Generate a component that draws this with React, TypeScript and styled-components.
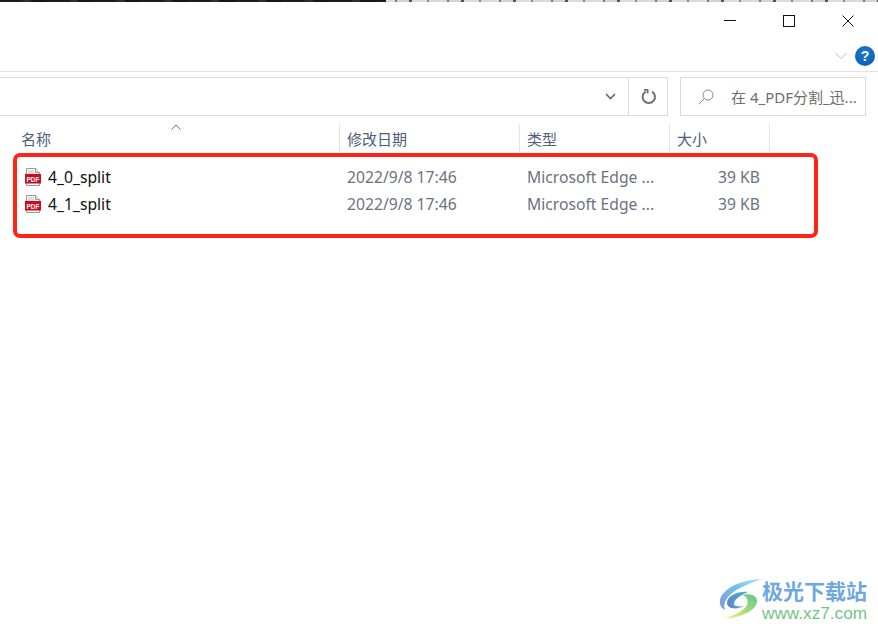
import React from 'react'
import styled, { createGlobalStyle } from 'styled-components'

const Global = createGlobalStyle`
    html, body { margin: 0; padding: 0; background: #fff; }
    body { font-family: "Noto Sans", "Noto Sans CJK SC", sans-serif; }
`

const Page = styled.div`
    position: relative;
    width: 878px;
    height: 629px;
    overflow: hidden;
    background: #fff;
`

const TopStrip = styled.div`
    display: flex;
    height: 2px;
`

const StripDark = styled.div`
    width: 386px;
    background: repeating-linear-gradient(90deg, #1d1d1d 0 23px, #2e2e2e 23px 31px, #161616 31px 47px);
`

const StripLight = styled.div`
    flex: 1;
    background: repeating-linear-gradient(90deg, #dcdcdc 0 9px, #777 9px 11px, #d4d4d4 11px 23px, #555 23px 26px, #dcdcdc 26px 41px, #888 41px 43px, #d8d8d8 43px 52px);
`

const TitleBar = styled.div`
    display: flex;
    justify-content: flex-end;
    align-items: center;
    height: 38px;
    padding-right: 1px;
`

const WindowButton = styled.div`
    display: flex;
    align-items: center;
    justify-content: center;
    width: 58px;
    height: 38px;
    &:nth-child(2) { width: 60px; padding-right: 1px; box-sizing: border-box; }
`

const RibbonRow = styled.div`
    display: flex;
    justify-content: flex-end;
    align-items: center;
    gap: 8px;
    height: 31px;
    padding-right: 3px;
    border-bottom: 1px solid #e3e3e3;
`

const HelpBadge = styled.div`
    width: 20px;
    height: 20px;
    border-radius: 50%;
    background: radial-gradient(circle at 50% 35%, #1a7ad0, #0a5bb0);
    color: #fff;
    font: bold 14px/20px "Liberation Sans", sans-serif;
    text-align: center;
`

const NavRow = styled.div`
    display: flex;
    height: 39px;
    margin-top: 5px;
`

const AddressBox = styled.div`
    display: flex;
    justify-content: flex-end;
    width: 668px;
    box-sizing: border-box;
    border: 1px solid #dadada;
    border-left: 0;
`

const AddressButton = styled.div`
    display: flex;
    align-items: center;
    justify-content: center;
    width: ${(p: { $w: number }) => p.$w}px;
`

const RefreshButton = styled(AddressButton)`
    border-left: 1px solid #dadada;
    padding-left: 2px;
    box-sizing: border-box;
`

const SearchBox = styled.div`
    display: flex;
    align-items: center;
    box-sizing: border-box;
    width: 186px;
    margin-left: 12px;
    padding-left: 17px;
    border: 1px solid #dadada;
`

const SearchText = styled.span`
    margin-left: 17px;
    font-size: 15px;
    color: #6d6d6d;
    white-space: nowrap;
`

const Columns = styled.div`
    display: grid;
    grid-template-columns: 340px 180px 150px 100px;
`

const HeaderRow = styled(Columns)`
    position: relative;
    height: 30px;
    margin-top: 8px;
`

const HeaderCell = styled.div`
    padding-left: ${(p: { $first?: boolean }) => (p.$first ? 21 : 7)}px;
    border-right: 1px solid #e5e5e5;
    font-size: 15px;
    line-height: 30px;
    color: #4c607a;
`

const SortCaret = styled.svg`
    position: absolute;
    left: 171px;
    top: 0;
`

const FileList = styled.div`
    margin-top: 9px;
`

const FileRow = styled(Columns)`
    height: 27px;
    align-items: center;
    font-size: 15.7px;
    line-height: 22px;
    color: #6b7280;
`

const NameCell = styled.div`
    display: flex;
    align-items: center;
    gap: 7px;
    padding-left: 25px;
    color: #111;
`

const PlainCell = styled.div`
    padding-left: 7px;
    white-space: nowrap;
`

const SizeCell = styled.div`
    padding-right: 10px;
    text-align: right;
    white-space: nowrap;
`

const RedFrame = styled.div`
    position: absolute;
    left: 13px;
    top: 153px;
    width: 805px;
    height: 85px;
    box-sizing: border-box;
    border: 4px solid #ff2415;
    border-radius: 7px;
`

const Watermark = styled.div`
    position: absolute;
    left: 718px;
    top: 578px;
    display: flex;
`

const BrandText = styled.div`
    display: flex;
    flex-direction: column;
`

const BrandName = styled.div`
    font: bold 21px/25px "Noto Sans CJK SC", sans-serif;
    color: #6fa8de;
    white-space: nowrap;
`

const BrandUrl = styled.div`
    margin-top: 1px;
    font: 17.2px/18px "Liberation Sans", sans-serif;
    color: #72c486;
    white-space: nowrap;
`

function PdfIcon() {
    return (
        <svg width="16" height="18" viewBox="0 0 16 18">
            <path d="M1.5 .5H10.5L14.5 4.5V17.5H1.5Z" fill="#fff" stroke="#9a9a9a" />
            <path d="M10.5 .5V4.5H14.5" fill="#e8e8e8" stroke="#9a9a9a" />
            <path d="M3 3H9M3 5H9" stroke="#bdbdbd" />
            <rect x="0" y="6" width="16" height="9.5" fill="#d3061c" />
            <text x="8" y="13.8" textAnchor="middle" textLength="13" lengthAdjust="spacingAndGlyphs" fontFamily="Liberation Sans" fontWeight="700" fontSize="8" fill="#fff">PDF</text>
        </svg>
    )
}

function LogoSwirl() {
    return (
        <svg width="44" height="44" viewBox="0 0 44 44">
            <defs>
                <linearGradient id="swirlBlue" x1="0" y1="1" x2="1" y2="0">
                    <stop offset="0" stopColor="#7f9ad6" />
                    <stop offset=".55" stopColor="#6fc0ec" />
                    <stop offset="1" stopColor="#b5e6f7" />
                </linearGradient>
                <linearGradient id="swirlInner" x1="0" y1="0" x2="1" y2="0">
                    <stop offset="0" stopColor="#5a86cc" />
                    <stop offset="1" stopColor="#55b4cc" />
                </linearGradient>
                <linearGradient id="swirlGreen" x1="0" y1="1" x2="1" y2="0">
                    <stop offset="0" stopColor="#fbf08a" />
                    <stop offset=".5" stopColor="#a6dc78" />
                    <stop offset="1" stopColor="#5cc58a" />
                </linearGradient>
            </defs>
            <path d="M44 1C30 1 12 6 4 17C0 23 2 30 7 32C5 27 7 21 13 16C21 9 33 5 44 1Z" fill="url(#swirlBlue)" />
            <path d="M30 14C20 13 9 18 9 25C9 31 19 32 26 28C20 29 15 28 16 25C17 21 23 17 30 14Z" fill="url(#swirlInner)" />
            <path d="M24 17C31 15 38 17 39 22C40 31 26 39 7 41C14 37 26 34 29 27C31 22 28 18 24 17Z" fill="url(#swirlGreen)" />
        </svg>
    )
}

const columns = ['名称', '修改日期', '类型', '大小']
const files = ['4_0_split', '4_1_split']

export default function App() {
    return (
        <Page>
            <Global />
            <TopStrip>
                <StripDark />
                <StripLight />
            </TopStrip>
            <TitleBar>
                <WindowButton>
                    <svg width="12" height="12" viewBox="0 0 12 12"><path d="M0 5.5H12" stroke="#111" /></svg>
                </WindowButton>
                <WindowButton>
                    <svg width="12" height="12" viewBox="0 0 12 12"><rect x=".5" y=".5" width="11" height="11" fill="none" stroke="#111" /></svg>
                </WindowButton>
                <WindowButton>
                    <svg width="12" height="12" viewBox="0 0 12 12"><path d="M.5 .5L11.5 11.5M11.5 .5L.5 11.5" stroke="#111" /></svg>
                </WindowButton>
            </TitleBar>
            <RibbonRow>
                <svg width="12" height="8" viewBox="0 0 12 8"><path d="M.5 1L6 6.5L11.5 1" fill="none" stroke="#bdbdbd" /></svg>
                <HelpBadge>?</HelpBadge>
            </RibbonRow>
            <NavRow>
                <AddressBox>
                    <AddressButton $w={35}>
                        <svg width="11" height="7" viewBox="0 0 11 7"><path d="M1 1L5.5 5.5L10 1" fill="none" stroke="#666" strokeWidth="1.6" /></svg>
                    </AddressButton>
                    <RefreshButton $w={39}>
                        <svg width="16" height="16" viewBox="0 0 16 16"><path d="M4.6 2.6A6.2 6.2 0 1 0 11 2.6" fill="none" stroke="#707070" strokeWidth="2" /><path d="M3 .8H6.6V4.6" fill="none" stroke="#707070" strokeWidth="1.8" /></svg>
                    </RefreshButton>
                </AddressBox>
                <SearchBox>
                    <svg width="16" height="16" viewBox="0 0 16 16"><circle cx="10" cy="6" r="5" fill="none" stroke="#8a8a8a" /><path d="M6.4 9.6L.8 15.2" stroke="#8a8a8a" /></svg>
                    <SearchText>在 4_PDF分割_迅...</SearchText>
                </SearchBox>
            </NavRow>
            <HeaderRow>
                {columns.map((c, i) => (
                    <HeaderCell key={c} $first={i === 0}>{c}</HeaderCell>
                ))}
                <SortCaret width="10" height="6" viewBox="0 0 10 6">
                    <path d="M.5 5.5L5 1L9.5 5.5" fill="none" stroke="#777" />
                </SortCaret>
            </HeaderRow>
            <FileList>
                {files.map(f => (
                    <FileRow key={f}>
                        <NameCell><PdfIcon />{f}</NameCell>
                        <PlainCell>2022/9/8 17:46</PlainCell>
                        <PlainCell>Microsoft Edge ...</PlainCell>
                        <SizeCell>39 KB</SizeCell>
                    </FileRow>
                ))}
            </FileList>
            <RedFrame />
            <Watermark>
                <LogoSwirl />
                <BrandText>
                    <BrandName>极光下载站</BrandName>
                    <BrandUrl>www.xz7.com</BrandUrl>
                </BrandText>
            </Watermark>
        </Page>
    )
}
